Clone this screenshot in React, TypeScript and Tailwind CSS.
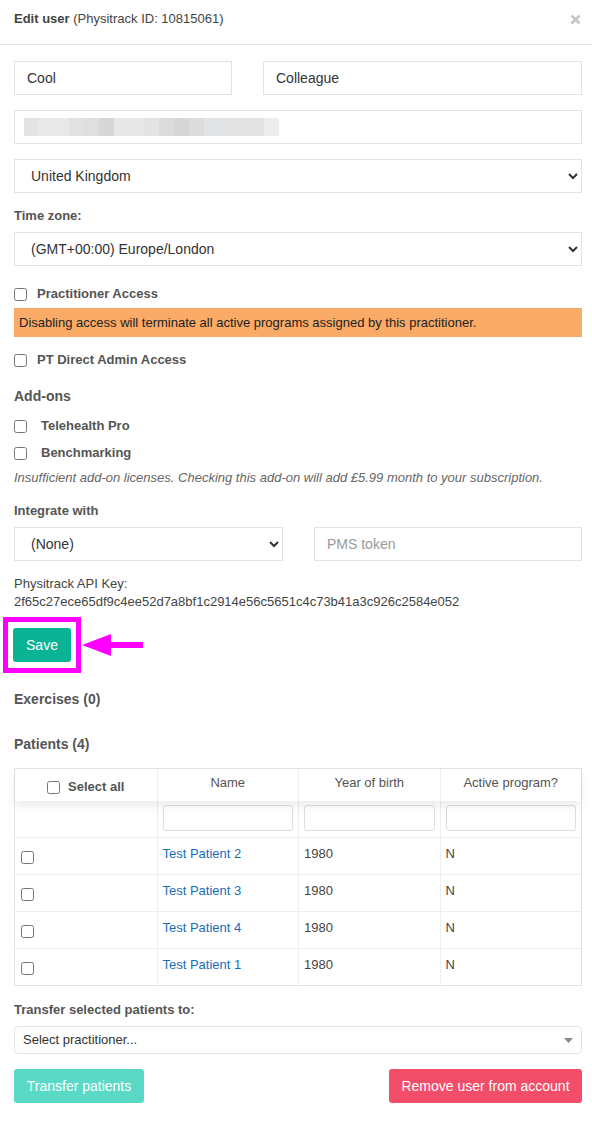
import React from "react";

const blurColors = [
  "#e4e4e4", "#e9e9e9", "#e9e9e9", "#e1e1e1", "#dfdfdf", "#d6d7d8", "#e6e7e6", "#e6e7e6",
  "#e3e4e3", "#dadbda", "#d6d7d8", "#dbdcdb", "#e2e3e4", "#e2e3e4", "#e3e3e3", "#e3e3e3", "#eceded",
];

const patients = [
  { name: "Test Patient 2", year: "1980", active: "N" },
  { name: "Test Patient 3", year: "1980", active: "N" },
  { name: "Test Patient 4", year: "1980", active: "N" },
  { name: "Test Patient 1", year: "1980", active: "N" },
];

function Check({ label, gap, className = "" }: { label: string; gap: string; className?: string }) {
  return (
    <label className={`flex h-4 items-center text-[13px] font-bold text-[#555] ${className}`}>
      <input type="checkbox" className="m-0 h-[13px] w-[13px]" />
      <span className={gap}>{label}</span>
    </label>
  );
}

export default function App() {
  return (
    <div className="min-h-[1131px] w-[592px] bg-white font-['Liberation_Sans',Arial,sans-serif] text-[#333]">
      <div className="flex h-[45px] items-start justify-between border-b border-[#e5e5e5] pl-[14px] pr-[11px] pt-[11px]">
        <p className="text-[13px] leading-4 text-[#444]">
          <span className="font-bold">Edit user</span> (Physitrack ID: 10815061)
        </p>
        <svg width="11" height="11" viewBox="0 0 11 11" className="mt-[3px]">
          <path d="M1.5 1.5 L9.5 9.5 M9.5 1.5 L1.5 9.5" stroke="#c6c6c6" strokeWidth="2.6" />
        </svg>
      </div>

      <div className="pb-[28px] pl-[14px] pr-[10px]">
        <div className="mt-[16px] flex gap-[31px]">
          <input
            defaultValue="Cool"
            className="h-[34px] w-[218px] border border-[#e3e3e3] px-[12px] text-[14px] text-[#333] outline-none"
          />
          <input
            defaultValue="Colleague"
            className="h-[34px] flex-1 border border-[#e3e3e3] px-[12px] text-[14px] text-[#333] outline-none"
          />
        </div>

        <div className="mt-[15px] flex h-[34px] items-center border border-[#e3e3e3] pl-[9px]">
          {blurColors.map((c, i) => (
            <div key={i} className="h-[18px] w-[15px]" style={{ backgroundColor: c }} />
          ))}
        </div>

        <select className="mt-[15px] h-[34px] w-full border border-[#e3e3e3] bg-white pl-[12px] pr-[6px] text-[14px] text-[#333] outline-none">
          <option>United Kingdom</option>
        </select>

        <p className="mt-[15px] text-[13px] font-bold leading-4 text-[#555]">Time zone:</p>
        <select className="mt-[8px] h-[34px] w-full border border-[#e3e3e3] bg-white pl-[12px] pr-[6px] text-[14px] text-[#333] outline-none">
          <option>(GMT+00:00) Europe/London</option>
        </select>

        <Check label="Practitioner Access" gap="ml-[10px]" className="mt-[20px]" />
        <div className="mt-[6px] flex h-[29px] items-center bg-[#f9ab67] px-[5px] text-[13px] text-[#222]">
          Disabling access will terminate all active programs assigned by this practitioner.
        </div>
        <Check label="PT Direct Admin Access" gap="ml-[10px]" className="mt-[15px]" />

        <p className="mt-[20px] text-[14px] font-bold leading-4 text-[#555]">Add-ons</p>
        <Check label="Telehealth Pro" gap="ml-[14px]" className="mt-[14px]" />
        <Check label="Benchmarking" gap="ml-[14px]" className="mt-[11px]" />
        <p className="mt-[9px] text-[13px] italic leading-4 text-[#666]">
          Insufficient add-on licenses. Checking this add-on will add £5.99 month to your subscription.
        </p>

        <p className="mt-[17px] text-[13px] font-bold leading-4 text-[#555]">Integrate with</p>
        <div className="mt-[8px] flex gap-[31px]">
          <select className="h-[34px] w-[269px] border border-[#e3e3e3] bg-white pl-[12px] pr-[6px] text-[14px] text-[#333] outline-none">
            <option>(None)</option>
          </select>
          <input
            placeholder="PMS token"
            className="h-[34px] flex-1 border border-[#e3e3e3] px-[12px] text-[14px] text-[#333] outline-none placeholder:text-[#999]"
          />
        </div>

        <div className="mt-[14px] text-[13px] leading-[18px] text-[#444]">
          <p>Physitrack API Key:</p>
          <p>2f65c27ece65df9c4ee52d7a8bf1c2914e56c5651c4c73b41a3c926c2584e052</p>
        </div>

        <div className="ml-[-11px] mt-[6px] flex items-center">
          <div className="border-[5px] border-[#ff00ff] px-[5px] py-[6px]">
            <button className="h-[34px] w-[58px] rounded-[3px] bg-[#0ab394] text-[14px] text-white">Save</button>
          </div>
          <svg width="62" height="24" viewBox="0 0 62 24" className="ml-[1px]">
            <polygon points="0,12 29,1 29,23" fill="#ff00ff" />
            <rect x="28" y="9" width="33" height="6" fill="#ff00ff" />
          </svg>
        </div>

        <p className="mt-[17px] text-[14px] font-bold leading-[18px] text-[#555]">Exercises (0)</p>
        <p className="mt-[27px] text-[14px] font-bold leading-[18px] text-[#555]">Patients (4)</p>

        <div className="mt-[15px] border border-[#e3e3e3] text-[13px]">
          <div className="relative z-10 grid h-[32px] grid-cols-4 bg-white shadow-[0_5px_10px_rgba(0,0,0,0.08)]">
            <div className="flex items-start justify-center pt-[10px]">
              <label className="flex items-center font-bold text-[#555]">
                <input type="checkbox" className="m-0 h-[13px] w-[13px]" />
                <span className="ml-[8px] leading-4">Select all</span>
              </label>
            </div>
            <div className="border-l border-[#eee] pt-[4px] text-center text-[#555]">Name</div>
            <div className="border-l border-[#eee] pt-[4px] text-center text-[#555]">Year of birth</div>
            <div className="border-l border-[#eee] pt-[4px] text-center text-[#555]">Active program?</div>
          </div>
          <div className="grid h-[36px] grid-cols-4">
            <div />
            {[0, 1, 2].map((i) => (
              <div key={i} className="flex items-center border-l border-[#eee] px-[5px] pb-[2px]">
                <input className="h-[26px] w-full rounded-[3px] border border-[#ddd] outline-none" />
              </div>
            ))}
          </div>
          {patients.map((p, i) => (
            <div key={i} className="grid h-[37px] grid-cols-4 border-t border-[#eee]">
              <div className="flex items-center pl-[6px] pt-[2px]">
                <input type="checkbox" className="m-0 h-[13px] w-[13px]" />
              </div>
              <div className="flex items-center border-l border-[#eee] pb-[4px] pl-[5px] text-[#176eb7]">{p.name}</div>
              <div className="flex items-center border-l border-[#eee] pb-[4px] pl-[5px] text-[#444]">{p.year}</div>
              <div className="flex items-center border-l border-[#eee] pb-[4px] pl-[5px] text-[#444]">{p.active}</div>
            </div>
          ))}
        </div>

        <p className="mt-[16px] text-[13px] font-bold leading-4 text-[#555]">Transfer selected patients to:</p>
        <div className="mt-[8px] flex h-[28px] items-center justify-between rounded-[4px] border border-[#e3e3e3] pl-[8px] pr-[8px] text-[13px] text-[#333]">
          <span>Select practitioner...</span>
          <svg width="9" height="5" viewBox="0 0 9 5">
            <polygon points="0,0 9,0 4.5,5" fill="#888" />
          </svg>
        </div>

        <div className="mt-[15px] flex justify-between">
          <button className="h-[34px] w-[130px] rounded-[3px] bg-[#5ad9c6] text-[14px] text-white">Transfer patients</button>
          <button className="h-[34px] w-[193px] rounded-[3px] bg-[#f24d69] text-[14px] text-white">
            Remove user from account
          </button>
        </div>
      </div>
    </div>
  );
}
